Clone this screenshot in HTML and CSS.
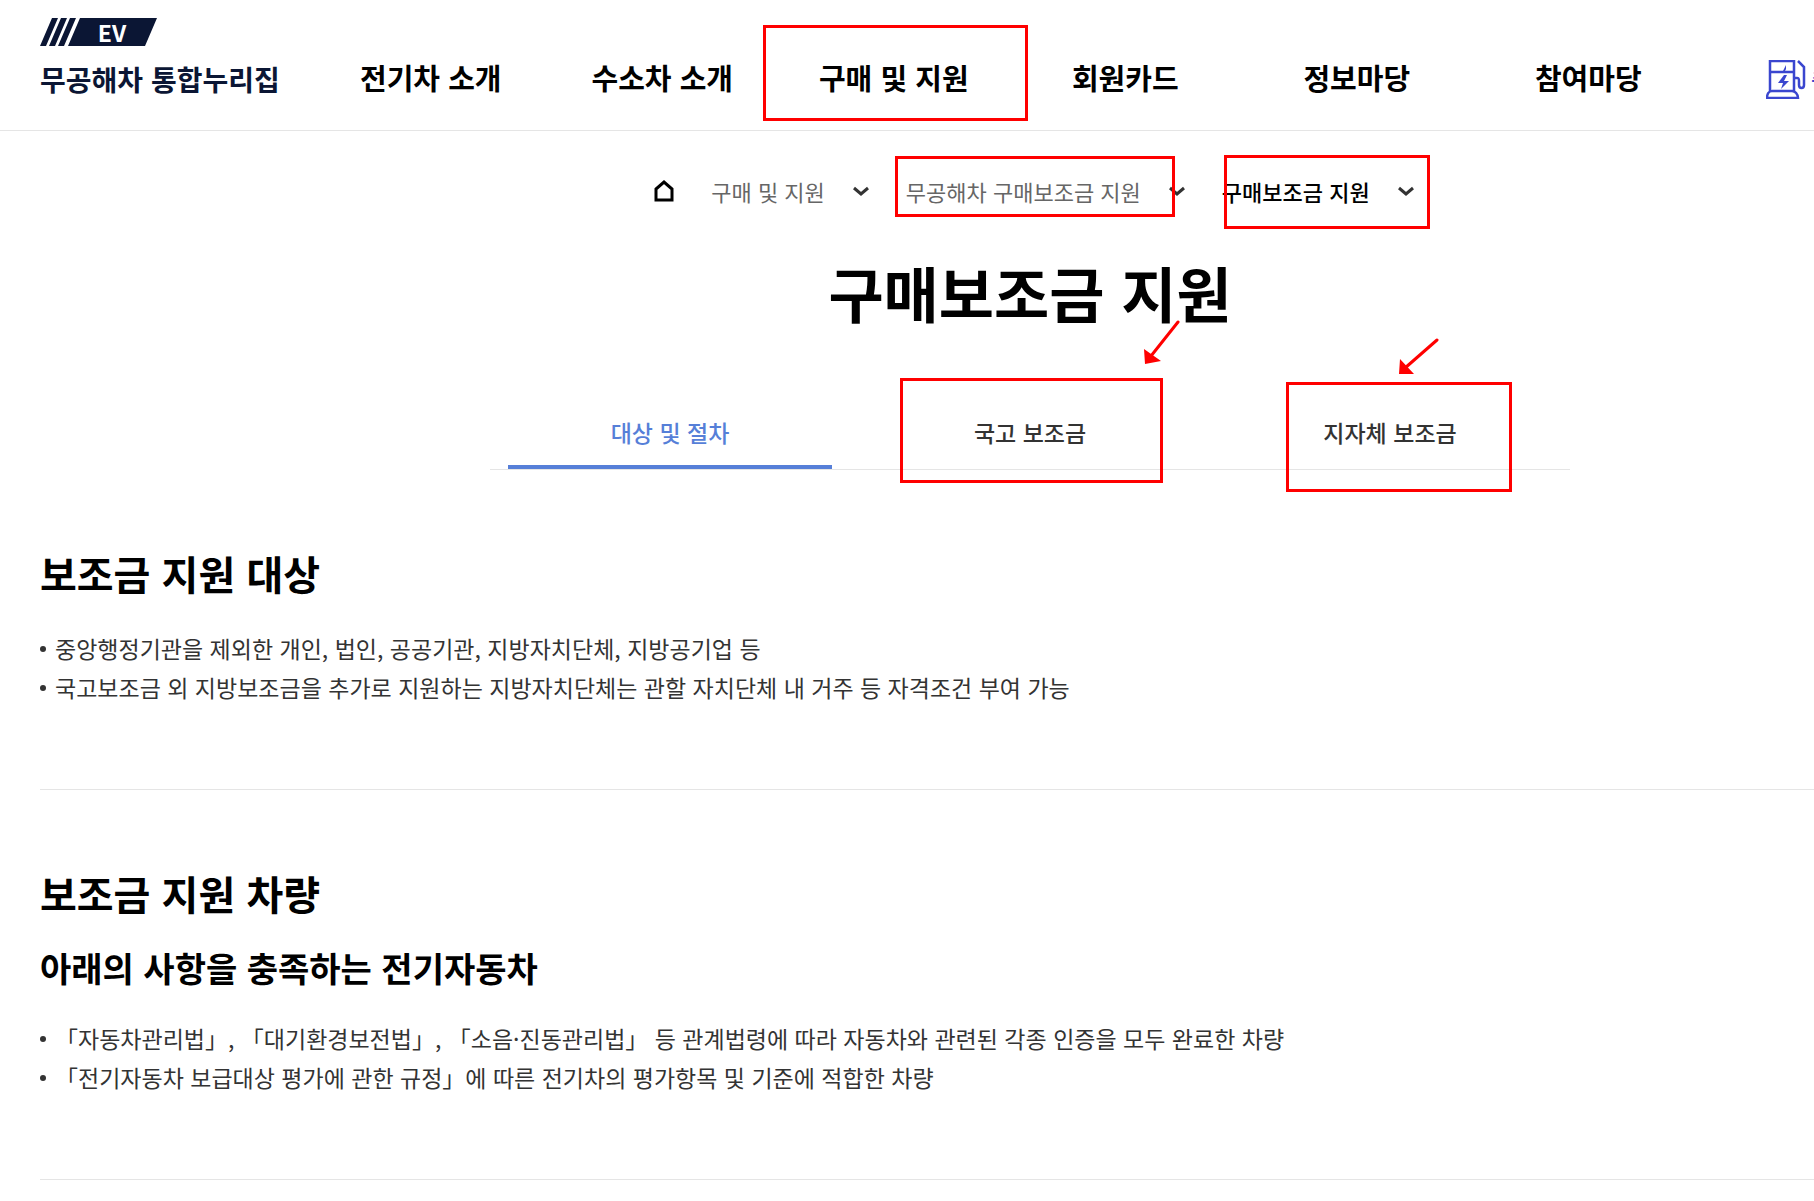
FILE: index.html
```html
<!DOCTYPE html>
<html lang="ko">
<head>
<meta charset="utf-8">
<meta name="viewport" content="width=device-width, initial-scale=1">
<title>구매보조금 지원 - 무공해차 통합누리집</title>
<link rel="stylesheet" href="styles.css">
</head>
<body>
<div class="page">
  <header class="header">
    <a class="logo" href="#">
      <span class="logo-badge">
        <svg class="logo-shape" viewBox="0 0 118 28" aria-hidden="true">
          <path d="M12 0h6L6 28H0zM21 0h6L15 28H9zM30 0h6L24 28h-6zM40 0h77l-12 28H28z"/>
        </svg>
        <span class="logo-ev">EV</span>
      </span>
      <span class="logo-name">무공해차 통합누리집</span>
    </a>
    <nav class="nav" aria-label="주 메뉴">
      <a href="#">전기차 소개</a>
      <a href="#">수소차 소개</a>
      <a href="#">구매 및 지원</a>
      <a href="#">회원카드</a>
      <a href="#">정보마당</a>
      <a href="#">참여마당</a>
    </nav>
    <a class="charger" href="#">
      <svg class="charger-icon" viewBox="0 0 40 39" aria-hidden="true">
        <path d="M4 31V1h24v30M4 12h24M1 38c0-4 2-7 5-7h20c3 0 6 3 6 7zM28 18h3c2 0 2 1 2 3v4c0 4 5 4 5 0V7l-6-6"/>
        <path class="bolt" d="M20 5l-4 8h2l2-4zM18 15l-6 8h5l-2 6 8-8h-5l3-6z"/>
      </svg>
      <span>충전소</span>
    </a>
  </header>

  <main>
    <nav class="crumbs" aria-label="현재 위치">
      <a class="home" href="#" aria-label="홈">
        <svg viewBox="0 0 20 22" aria-hidden="true"><path d="M2 20V9l8-7 8 7v11z"/></svg>
      </a>
      <button class="crumb" type="button">구매 및 지원
        <svg viewBox="0 0 16 10" aria-hidden="true"><path d="M1 2l7 6 7-6"/></svg>
      </button>
      <button class="crumb" type="button">무공해차 구매보조금 지원
        <svg viewBox="0 0 16 10" aria-hidden="true"><path d="M1 2l7 6 7-6"/></svg>
      </button>
      <button class="crumb current" type="button">구매보조금 지원
        <svg viewBox="0 0 16 10" aria-hidden="true"><path d="M1 2l7 6 7-6"/></svg>
      </button>
    </nav>

    <h1 class="title">구매보조금 지원</h1>

    <nav class="tabs" aria-label="보조금 안내">
      <a class="tab active" href="#">대상 및 절차</a>
      <a class="tab" href="#">국고 보조금</a>
      <a class="tab" href="#">지자체 보조금</a>
    </nav>

    <section class="section">
      <h2>보조금 지원 대상</h2>
      <ul>
        <li>중앙행정기관을 제외한 개인, 법인, 공공기관, 지방자치단체, 지방공기업 등</li>
        <li>국고보조금 외 지방보조금을 추가로 지원하는 지방자치단체는 관할 자치단체 내 거주 등 자격조건 부여 가능</li>
      </ul>
    </section>
    <section class="section">
      <h2>보조금 지원 차량</h2>
      <h3>아래의 사항을 충족하는 전기자동차</h3>
      <ul>
        <li>「자동차관리법」, 「대기환경보전법」, 「소음·진동관리법」 등 관계법령에 따라 자동차와 관련된 각종 인증을 모두 완료한 차량</li>
        <li>「전기자동차 보급대상 평가에 관한 규정」에 따른 전기차의 평가항목 및 기준에 적합한 차량</li>
      </ul>
    </section>
  </main>

  <!-- Red guide marks laid over the page -->
  <svg class="marks" width="2060" height="520" viewBox="0 0 2060 520" aria-hidden="true">
    <g class="mark-box">
      <rect x="764.5" y="26.5" width="262" height="93"/>
      <rect x="896.5" y="157.5" width="277" height="58"/>
      <rect x="1225.5" y="156.5" width="203" height="71"/>
      <rect x="901.5" y="379.5" width="260" height="102"/>
      <rect x="1287.5" y="383.5" width="223" height="107"/>
      <path d="M1178 322L1151 356M1437 340L1405 368" stroke-linecap="round"/>
    </g>
    <path class="mark-head" d="M1144 349l1 15 16-3zM1400 359l-1 15h15z"/>
  </svg>
</div>
</body>
</html>
```

FILE: styles.css
```css
* {
  box-sizing: border-box;
}

body {
  margin: 0;
  overflow-x: hidden;
  background: #fff;
  color: #333;
  font-family: "Noto Sans CJK KR", "Noto Sans", sans-serif;
}

h1, h2, h3, ul {
  margin: 0;
  padding: 0;
  color: #000;
}

a {
  color: inherit;
  text-decoration: none;
}

svg {
  display: block;
}

.page {
  position: relative;
  min-width: 2060px;
}

/* Header */
.header {
  display: flex;
  align-items: flex-start;
  height: 131px;
  padding: 0 40px;
  border-bottom: 1px solid #e5e5e5;
}

.logo {
  width: 275px;
  padding-top: 18px;
  color: #0b1634;
}

.logo-badge {
  display: grid;
  width: 118px;
  height: 28px;
}

.logo-shape,
.logo-ev {
  grid-area: 1 / 1;
}

.logo-shape {
  fill: #0b1634;
}

.logo-ev {
  padding-left: 26px;
  color: #fff;
  font-size: 23px;
  font-weight: 700;
  line-height: 28px;
  text-align: center;
}

.logo-name {
  display: block;
  padding-top: 13px;
  font-size: 28px;
  font-weight: 700;
  line-height: 40px;
  white-space: nowrap;
}

.nav {
  display: grid;
  grid-template-columns: repeat(6, 1fr);
  width: 1389px;
  padding-top: 57px;
  color: #000;
  font-size: 29px;
  font-weight: 700;
  line-height: 40px;
  text-align: center;
}

.charger {
  display: flex;
  gap: 5px;
  padding: 60px 0 0 62px;
  color: #3a46cf;
  font-size: 23px;
  font-weight: 500;
  line-height: 38px;
  white-space: nowrap;
}

.charger-icon {
  width: 40px;
  height: 39px;
  fill: none;
  stroke: #3a46cf;
  stroke-width: 2.5;
}

.bolt {
  fill: #3a46cf;
  stroke: none;
}

/* Breadcrumb */
.crumbs {
  display: flex;
  justify-content: center;
  align-items: center;
  gap: 37px;
  padding: 40px 0 0 8px;
}

.home svg {
  width: 20px;
  height: 22px;
  fill: none;
  stroke: #000;
  stroke-width: 3;
}

.crumb {
  display: flex;
  align-items: center;
  gap: 28px;
  padding: 0;
  border: 0;
  background: none;
  color: #666;
  font: 400 22px/40px "Noto Sans CJK KR", "Noto Sans", sans-serif;
}

.crumb.current {
  color: #000;
  font-weight: 500;
}

.crumb svg {
  width: 16px;
  height: 10px;
  fill: none;
  stroke: #333;
  stroke-width: 3;
}

/* Title and tabs */
.title {
  padding-top: 41px;
  font-size: 60px;
  font-weight: 700;
  line-height: 80px;
  text-align: center;
}

.tabs {
  display: grid;
  grid-template-columns: repeat(3, 1fr);
  width: 1080px;
  margin: 61px auto 0;
  border-bottom: 1px solid #e5e5e5;
}

.tab {
  margin: 0 18px;
  padding: 19px 0 13px;
  border-bottom: 4px solid transparent;
  font-size: 23px;
  font-weight: 500;
  line-height: 40px;
  text-align: center;
}

.tab.active {
  border-color: #567fd8;
  color: #567fd8;
}

/* Content */
.section {
  margin: 0 40px;
  padding: 73px 0 82px;
  border-bottom: 1px solid #e5e5e5;
}

h2 {
  margin-bottom: 26px;
  font-size: 40px;
  font-weight: 700;
  line-height: 60px;
}

h3 {
  margin: -6px 0 26px;
  font-size: 34px;
  font-weight: 700;
  line-height: 50px;
}

.section ul {
  color: #333;
  font-size: 23px;
  line-height: 39px;
  list-style: none;
}

.section li {
  display: flex;
  align-items: center;
  gap: 9px;
}

.section li::before {
  content: "";
  width: 6px;
  height: 6px;
  border-radius: 50%;
  background: #333;
}

/* Guide marks */
.marks {
  position: absolute;
  top: 0;
  left: 0;
  pointer-events: none;
}

.mark-box {
  fill: none;
  stroke: #f00;
  stroke-width: 3;
}

.mark-head {
  fill: #f00;
}
```
